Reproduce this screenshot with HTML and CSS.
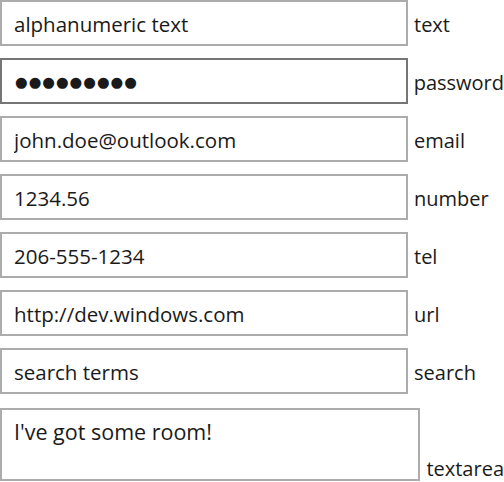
FILE: index.html
```html
<!DOCTYPE html>
<html>
<head>
<meta charset="utf-8">
<link rel="stylesheet" href="styles.css">
</head>
<body>
<form class="form">
  <div class="row"><input class="field" type="text" value="alphanumeric text"><span class="lbl">text</span></div>
  <div class="row"><input class="field pw" type="text" value="●●●●●●●●●" aria-label="password"><span class="lbl">password</span></div>
  <div class="row"><input class="field" type="email" value="john.doe@outlook.com"><span class="lbl">email</span></div>
  <div class="row"><input class="field" type="text" value="1234.56"><span class="lbl">number</span></div>
  <div class="row"><input class="field" type="tel" value="206-555-1234"><span class="lbl">tel</span></div>
  <div class="row"><input class="field" type="url" value="http://dev.windows.com"><span class="lbl">url</span></div>
  <div class="row"><input class="field" type="text" value="search terms"><span class="lbl">search</span></div>
  <div class="row row-ta"><textarea class="area">I've got some room!</textarea><span class="lbl lbl-ta">textarea</span></div>
</form>
</body>
</html>
```
FILE: styles.css
```css
html, body {
  margin: 0;
  padding: 0;
  background: #ffffff;
}
body {
  font-family: "Open Sans", "Noto Sans", sans-serif;
  color: #1a1a1a;
}
.form {
  display: flex;
  flex-direction: column;
  gap: 12px;
}
.row {
  display: flex;
  align-items: center;
}
.field {
  box-sizing: border-box;
  width: 408px;
  height: 46px;
  margin: 0;
  border: 2px solid #acacac;
  padding: 2px 0 0 12px;
  font-family: inherit;
  font-size: 20.5px;
  color: #1a1a1a;
  background: #fff;
  outline: none;
}
.pw {
  border-color: #767676;
  font-family: "DejaVu Sans", sans-serif;
  font-size: 14.5px;
  letter-spacing: 1px;
  padding-left: 13px;
}
.lbl {
  margin-left: 6px;
  font-size: 20px;
  color: #1a1a1a;
  padding-top: 3px;
}
.row-ta {
  align-items: flex-end;
  margin-top: 2px;
}
.area {
  box-sizing: border-box;
  width: 421px;
  height: 73px;
  margin: 0;
  border: 2px solid #acacac;
  padding: 7px 12px;
  font-family: inherit;
  font-size: 21.5px;
  color: #1a1a1a;
  resize: none;
  outline: none;
}
.lbl-ta {
  padding-top: 0;
  line-height: 24px;
}
```
